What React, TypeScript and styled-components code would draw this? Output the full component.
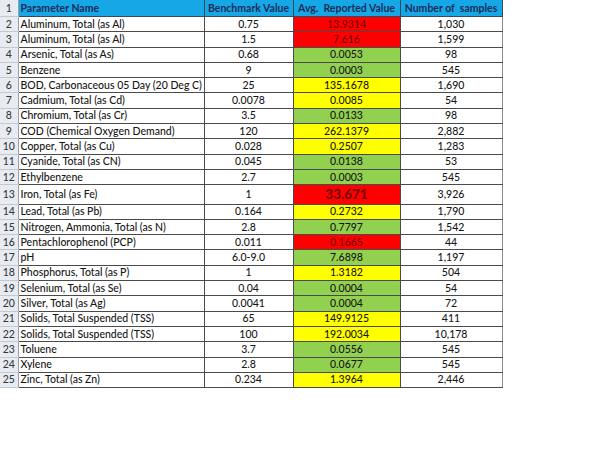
import React from 'react';
import styled, { createGlobalStyle } from 'styled-components';

type Level = 'red' | 'yellow' | 'green';

interface Row {
  name: string;
  benchmark: string;
  avg: string;
  level: Level;
  samples: string;
  big?: boolean;
}

const rows: Row[] = [
  { name: 'Aluminum, Total (as Al)', benchmark: '0.75', avg: '13.9314', level: 'red', samples: '1,030' },
  { name: 'Aluminum, Total (as Al)', benchmark: '1.5', avg: '7.616', level: 'red', samples: '1,599' },
  { name: 'Arsenic, Total (as As)', benchmark: '0.68', avg: '0.0053', level: 'green', samples: '98' },
  { name: 'Benzene', benchmark: '9', avg: '0.0003', level: 'green', samples: '545' },
  { name: 'BOD, Carbonaceous 05 Day (20 Deg C)', benchmark: '25', avg: '135.1678', level: 'yellow', samples: '1,690' },
  { name: 'Cadmium, Total (as Cd)', benchmark: '0.0078', avg: '0.0085', level: 'yellow', samples: '54' },
  { name: 'Chromium, Total (as Cr)', benchmark: '3.5', avg: '0.0133', level: 'green', samples: '98' },
  { name: 'COD (Chemical Oxygen Demand)', benchmark: '120', avg: '262.1379', level: 'yellow', samples: '2,882' },
  { name: 'Copper, Total (as Cu)', benchmark: '0.028', avg: '0.2507', level: 'yellow', samples: '1,283' },
  { name: 'Cyanide, Total (as CN)', benchmark: '0.045', avg: '0.0138', level: 'green', samples: '53' },
  { name: 'Ethylbenzene', benchmark: '2.7', avg: '0.0003', level: 'green', samples: '545' },
  { name: 'Iron, Total (as Fe)', benchmark: '1', avg: '33.671', level: 'red', samples: '3,926', big: true },
  { name: 'Lead, Total (as Pb)', benchmark: '0.164', avg: '0.2732', level: 'yellow', samples: '1,790' },
  { name: 'Nitrogen, Ammonia, Total (as N)', benchmark: '2.8', avg: '0.7797', level: 'green', samples: '1,542' },
  { name: 'Pentachlorophenol (PCP)', benchmark: '0.011', avg: '0.1665', level: 'red', samples: '44' },
  { name: 'pH', benchmark: '6.0-9.0', avg: '7.6898', level: 'green', samples: '1,197' },
  { name: 'Phosphorus, Total (as P)', benchmark: '1', avg: '1.3182', level: 'yellow', samples: '504' },
  { name: 'Selenium, Total (as Se)', benchmark: '0.04', avg: '0.0004', level: 'green', samples: '54' },
  { name: 'Silver, Total (as Ag)', benchmark: '0.0041', avg: '0.0004', level: 'green', samples: '72' },
  { name: 'Solids, Total Suspended (TSS)', benchmark: '65', avg: '149.9125', level: 'yellow', samples: '411' },
  { name: 'Solids, Total Suspended (TSS)', benchmark: '100', avg: '192.0034', level: 'yellow', samples: '10,178' },
  { name: 'Toluene', benchmark: '3.7', avg: '0.0556', level: 'green', samples: '545' },
  { name: 'Xylene', benchmark: '2.8', avg: '0.0677', level: 'green', samples: '545' },
  { name: 'Zinc, Total (as Zn)', benchmark: '0.234', avg: '1.3964', level: 'yellow', samples: '2,446' },
];

const fills: Record<Level, string> = {
  red: '#ff0000',
  yellow: '#ffff00',
  green: '#92d050',
};

const GlobalStyle = createGlobalStyle`
  html, body {
    margin: 0;
    padding: 0;
    background: #ffffff;
  }
  body {
    font-family: Lato, 'Liberation Sans', sans-serif;
  }
`;

const Sheet = styled.table`
  border-collapse: collapse;
  table-layout: fixed;
  width: 502px;
  font-size: 10.5px;
  font-weight: 500;
  line-height: 13px;
  color: #161616;
`;

const RowNum = styled.td`
  padding: 0;
  background: #e8ecf2;
  color: #383838;
  text-align: center;
  border-bottom: 1px solid #c4c9d1;
  border-right: 1px solid #9aa0a8;
`;

const Head = styled.th<{ $align?: string }>`
  height: 16px;
  padding: 0 2px;
  background: #16a7e6;
  color: #1b2d58;
  font-weight: 700;
  text-align: ${(p) => p.$align || 'center'};
  white-space: nowrap;
  border: 1px solid #3c4a55;
  border-top: none;
`;

const TR = styled.tr<{ $tall?: boolean }>`
  height: ${(p) => (p.$tall ? '19.3px' : '15.3px')};
`;

const Cell = styled.td<{ $left?: boolean }>`
  padding: 0 2px;
  text-align: ${(p) => (p.$left ? 'left' : 'center')};
  white-space: nowrap;
  overflow: hidden;
  border: 1px solid #4a4a4a;
`;

const AvgCell = styled(Cell)<{ $level: Level; $big?: boolean }>`
  background: ${(p) => fills[p.$level]};
  color: ${(p) => (p.$level === 'red' ? '#740000' : '#161616')};
  font-size: ${(p) => (p.$big ? '13.5px' : 'inherit')};
  font-weight: ${(p) => (p.$big ? 900 : 500)};
`;

const LastCell = styled(Cell)`
  border-right-color: #8a8a8a;
`;

const App: React.FC = () => (
  <>
    <GlobalStyle />
    <Sheet>
      <colgroup>
        <col style={{ width: 18 }} />
        <col style={{ width: 186 }} />
        <col style={{ width: 89 }} />
        <col style={{ width: 107 }} />
        <col style={{ width: 102 }} />
      </colgroup>
      <tbody>
        <tr>
          <RowNum>1</RowNum>
          <Head $align="left">Parameter Name</Head>
          <Head>Benchmark Value</Head>
          <Head>Avg.&nbsp; Reported Value</Head>
          <Head>Number of&nbsp; samples</Head>
        </tr>
        {rows.map((r, i) => (
          <TR key={i} $tall={r.big}>
            <RowNum>{i + 2}</RowNum>
            <Cell $left>{r.name}</Cell>
            <Cell>{r.benchmark}</Cell>
            <AvgCell $level={r.level} $big={r.big}>
              {r.avg}
            </AvgCell>
            <LastCell>{r.samples}</LastCell>
          </TR>
        ))}
      </tbody>
    </Sheet>
  </>
);

export default App;
